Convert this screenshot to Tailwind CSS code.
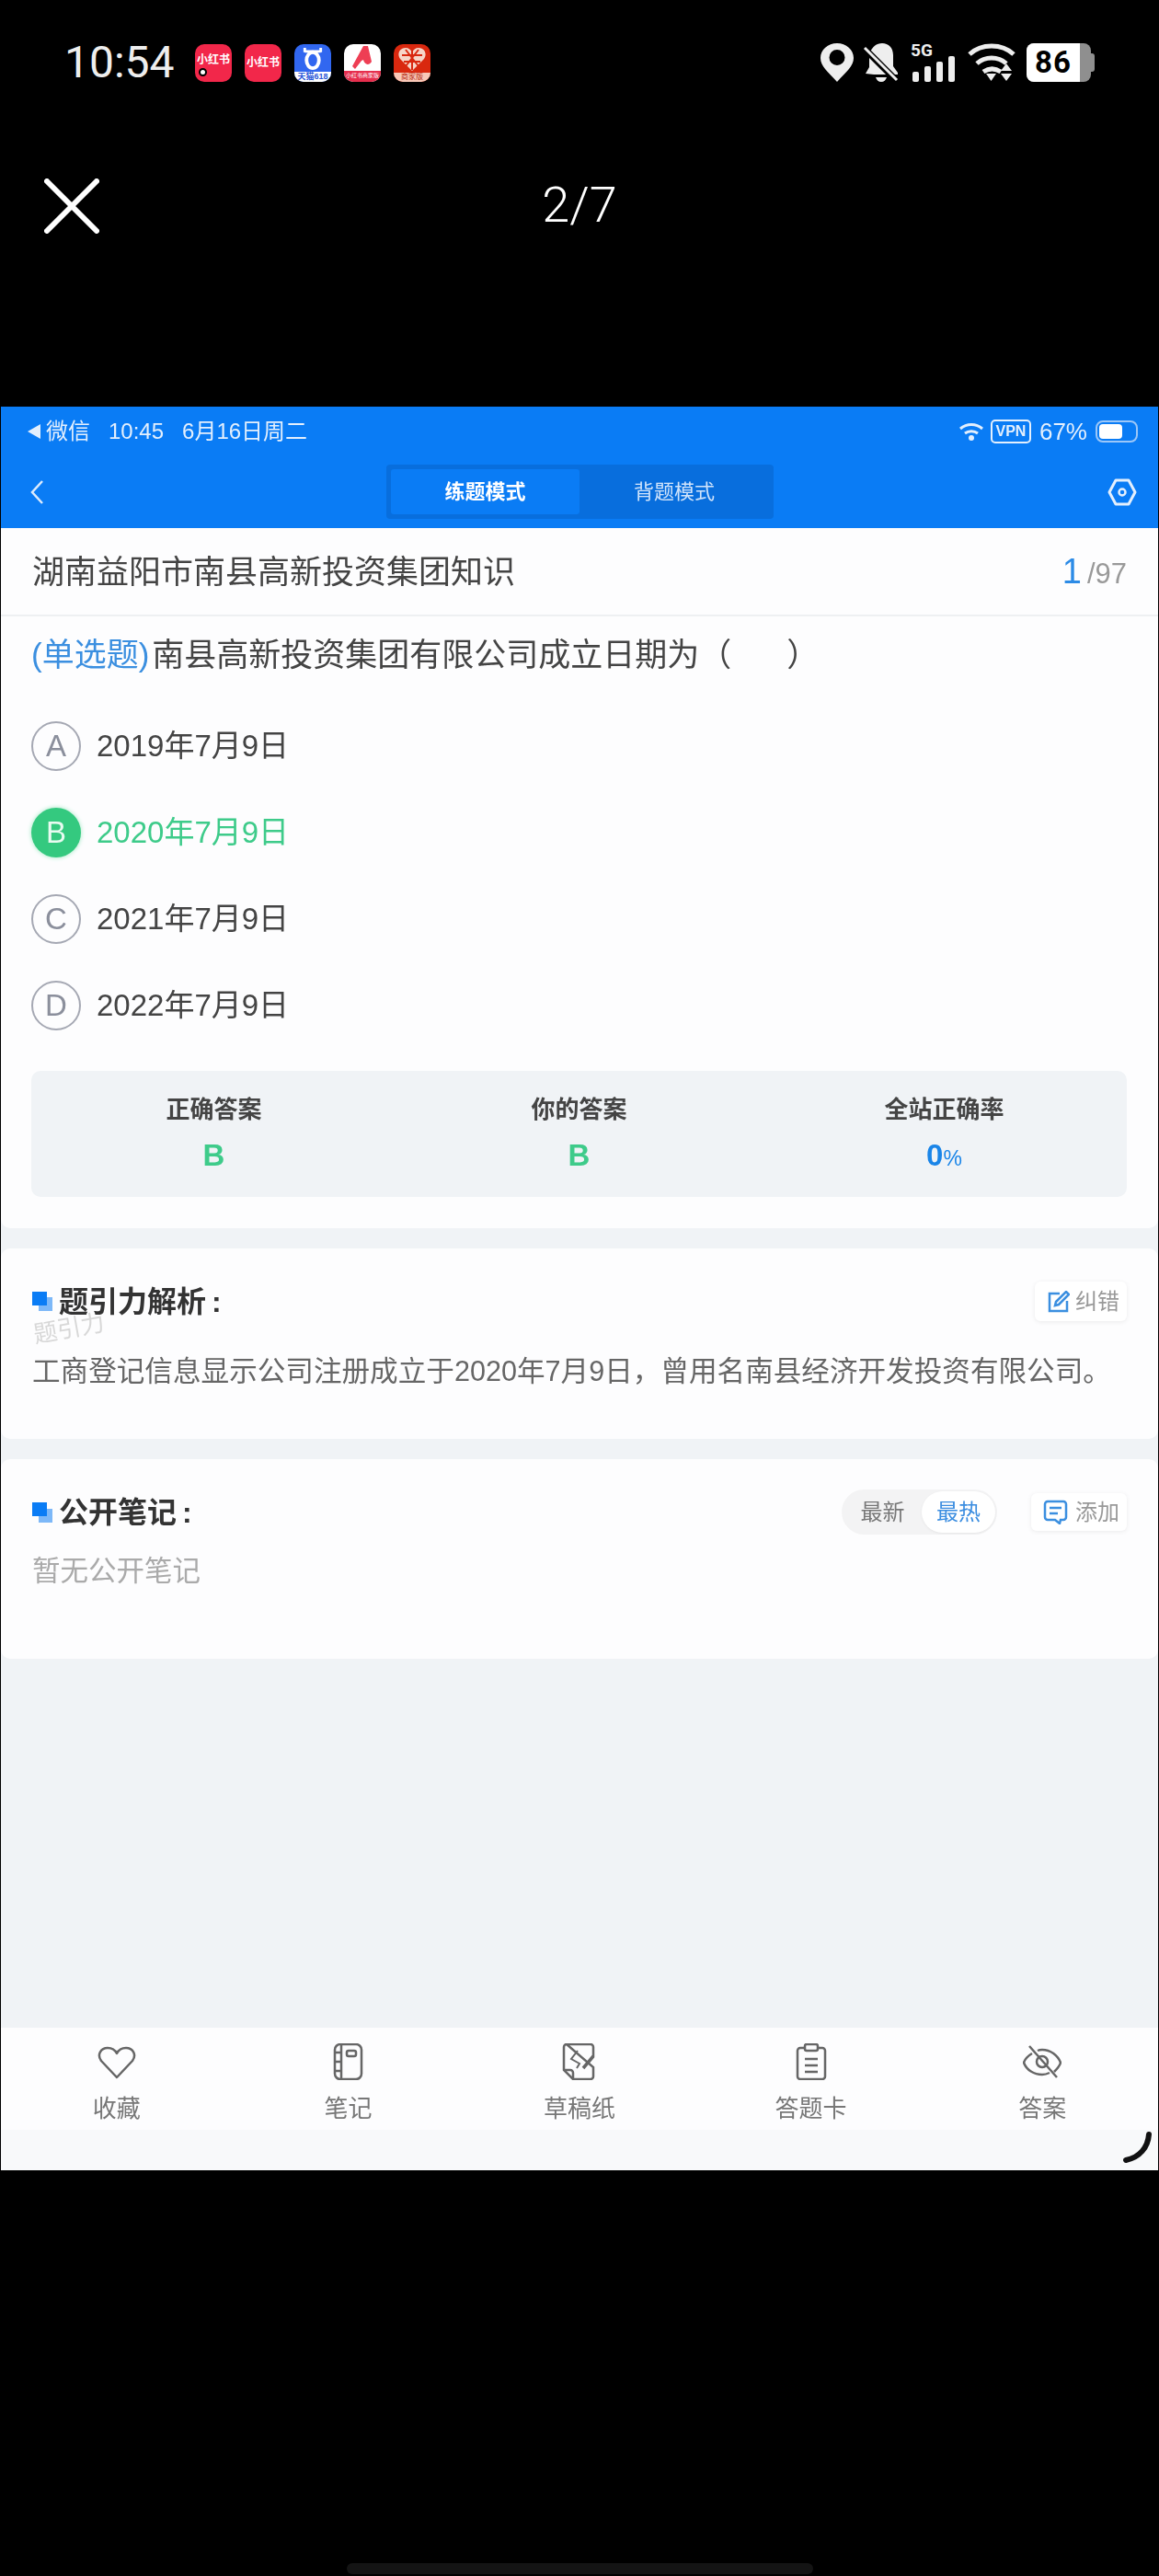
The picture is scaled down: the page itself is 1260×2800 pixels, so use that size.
<!DOCTYPE html>
<html lang="zh-CN">
<head>
  <meta charset="UTF-8">
  <title>题引力 截图预览</title>
  <script src="https://cdn.jsdelivr.net/npm/@tailwindcss/browser@4"></script>
</head>
<body class="bg-black font-['Liberation_Sans','Noto_Sans_CJK_SC',sans-serif]">
<div class="w-[1260px] h-[2800px] bg-black flex flex-col overflow-hidden relative">

  <!-- phone status bar -->
  <div class="h-[42px] mt-[47px] flex items-center text-[#eeeeee]">
    <span class="ml-[70px] w-[142px] font-['Roboto'] text-[48px] leading-none">10:54</span>
    <div class="flex gap-[14px]">
      <div class="w-[40px] h-[41px] rounded-[10px] bg-[#f2274a] relative flex items-center justify-center text-white text-[12px] font-bold leading-none pb-[6px]">小红书<span class="absolute left-[4px] bottom-[6px] w-[9px] h-[9px] rounded-full bg-white border-[2px] border-black"></span></div>
      <div class="w-[40px] h-[41px] rounded-[10px] bg-[#f2274a] flex items-center justify-center text-white text-[12px] font-bold leading-none">小红书</div>
      <div class="w-[40px] h-[41px] rounded-[10px] bg-[#3167f0] overflow-hidden flex flex-col items-center">
        <svg width="30" height="28" viewBox="0 0 30 28" class="mt-[3px]"><path d="M6 1v5M24 1v5M6 5h18" stroke="#fff" stroke-width="3" fill="none"/><ellipse cx="15" cy="15" rx="7" ry="9" fill="none" stroke="#fff" stroke-width="4"/></svg>
        <div class="w-full flex-1 bg-white text-[#2b57d8] text-[9px] font-bold text-center leading-[11px]">天猫618</div>
      </div>
      <div class="w-[40px] h-[41px] rounded-[10px] bg-white overflow-hidden flex flex-col items-center">
        <svg width="30" height="28" viewBox="0 0 30 28" class="mt-[1px]"><path d="M16 1h5l4 17c-3 5-8 3-9-2l-2 1-7 9-3-3z" fill="#ee3e54"/></svg>
        <div class="w-full flex-1 bg-[#e62e4d] text-white text-[6px] text-center leading-[10px] whitespace-nowrap">小红书商家版</div>
      </div>
      <div class="w-[40px] h-[41px] rounded-[10px] bg-[#d9280f] overflow-hidden flex flex-col items-center">
        <svg width="32" height="29" viewBox="0 0 32 29" class="mt-[2px]"><path d="M16 27 3 14C-1 8 3 2 9 2c3 0 6 2 7 5 1-3 4-5 7-5 6 0 10 6 6 12z" fill="#f6d5c8"/><path d="M16 4v22M5 10h22M7 17h18M9 4l14 18M23 4 9 22" stroke="#d9280f" stroke-width="2" fill="none"/></svg>
        <div class="w-full flex-1 bg-[#f9c9b8] text-[#b5280f] text-[8px] text-center leading-[10px]">商家版</div>
      </div>
    </div>
    <div class="ml-auto flex items-center">
      <svg width="36" height="42" viewBox="0 0 36 42"><path fill-rule="evenodd" fill="#eeeeee" d="M18 42C8 31 0 25 0 16 0 7 8 0 18 0s18 7 18 16c0 9-8 15-18 26zm0-18a8.500 8.500 0 1 0 0-17 8.500 8.500 0 0 0 0 17z"/></svg>
      <svg width="40" height="42" viewBox="0 0 40 42" class="ml-[10px]"><path fill="#eeeeee" d="M8 10C10 4 15 0 21 0c7 0 12 5 12 13v12l5 7v2H12L3 33l4-7V14zM14 37h12c-1 3-3 5-6 5s-5-2-6-5z"/><path d="M1 5 37 41" stroke="#000" stroke-width="7"/><path d="M2 5 37 40" stroke="#eeeeee" stroke-width="3"/></svg>
      <div class="relative w-[50px] h-[42px] ml-[12px]">
        <span class="absolute left-0 top-[-2px] font-['Roboto'] font-bold text-[19px] leading-[20px]">5G</span>
        <div class="absolute left-[2px] bottom-0 flex items-end gap-[6px]">
          <div class="w-[7px] h-[11px] rounded-[2px] bg-[#eeeeee]"></div>
          <div class="w-[7px] h-[17px] rounded-[2px] bg-[#eeeeee]"></div>
          <div class="w-[7px] h-[22px] rounded-[2px] bg-[#eeeeee]"></div>
          <div class="w-[7px] h-[28px] rounded-[2px] bg-[#eeeeee]"></div>
        </div>
      </div>
      <svg width="54" height="42" viewBox="0 0 54 42" class="ml-[12px]"><g fill="none" stroke="#eeeeee" stroke-width="5"><path d="M2 12C15 0 37 0 50 12"/><path d="M10 22c9-8 23-8 32 0"/><path d="M17 31c6-4 13-4 19 0"/></g><path d="M20 33h11l-5.500 8zM42 22l6 8H36zM36 33h12l-6 8z" fill="#eeeeee"/></svg>
      <div class="ml-[10px] mr-[70px] flex items-center">
        <div class="w-[70px] h-[42px] rounded-[8px] overflow-hidden bg-[#8f8f8f] flex">
          <div class="w-[58px] bg-white text-black font-['Roboto'] font-bold text-[33px] leading-[42px] text-center tracking-[1px]">86</div>
        </div>
        <div class="w-[4px] h-[20px] rounded-r-[3px] bg-[#8f8f8f]"></div>
      </div>
    </div>
  </div>

  <!-- viewer bar -->
  <div class="h-[60px] mt-[104px] relative flex items-center justify-center">
    <svg width="60" height="60" viewBox="0 0 60 60" class="absolute left-[48px] top-[1px]"><path d="M3 3 57 57M57 3 3 57" stroke="#ffffff" stroke-width="6" stroke-linecap="round"/></svg>
    <span class="font-['Roboto'] font-light text-[54px] leading-none text-white">2/7</span>
  </div>

  <!-- screenshot in viewer -->
  <div class="mx-[1px] mt-[189px] h-[1917px] bg-[#f0f3f6] flex flex-col relative blur-[0.6px]">

    <div class="h-[132px] bg-[#0a7cf5] shrink-0">
      <div class="h-[53px] pl-[29px] pr-[22px] flex items-center justify-between text-[#e3effd] text-[24px] leading-none">
        <div class="flex items-center">
          <span class="w-0 h-0 border-y-[8px] border-y-transparent border-r-[14px] border-r-[#e3effd] mr-[6px]"></span>
          <span>微信</span><span class="ml-[20px]">10:45</span><span class="ml-[20px]">6月16日周二</span>
        </div>
        <div class="flex items-center">
          <svg width="26" height="20" viewBox="0 0 26 20"><g fill="none" stroke="#e3effd" stroke-width="3"><path d="M1 7c7-6 17-6 24 0"/><path d="M6 12c4-3 10-3 14 0"/></g><circle cx="13" cy="17" r="3" fill="#e3effd"/></svg>
          <span class="ml-[8px] border-[2px] border-[#e3effd] rounded-[5px] h-[26px] w-[44px] text-[16px] font-bold leading-[22px] text-center">VPN</span>
          <span class="ml-[9px] text-[26px]">67%</span>
          <div class="ml-[9px] w-[46px] h-[24px] rounded-[8px] border-[2px] border-[#9cc7f8] p-[2px]"><div class="w-[25px] h-full rounded-[4px] bg-white"></div></div>
        </div>
      </div>
      <div class="h-[79px] relative flex items-start justify-center pt-[10px]">
        <svg width="16" height="28" viewBox="0 0 16 28" class="absolute left-[31px] top-[26px]"><path d="M14 2 3 14l11 12" fill="none" stroke="#dcebfd" stroke-width="2.500"/></svg>
        <div class="w-[421px] h-[59px] bg-[#086edd] rounded-[4px] flex p-[5px] ml-[1px]">
          <div class="w-[205px] bg-[#0a7cf5] rounded-[3px] flex items-center justify-center text-white text-[22px] font-bold">练题模式</div>
          <div class="flex-1 flex items-center justify-center text-[#cfe3fb] text-[22px]">背题模式</div>
        </div>
        <svg width="32" height="30" viewBox="0 0 32 30" class="absolute right-[23px] top-[25px]"><path d="M9 2h14l7 13-7 13H9L2 15z" fill="none" stroke="#e3effd" stroke-width="3" stroke-linejoin="round"/><circle cx="16" cy="15" r="3.500" fill="none" stroke="#e3effd" stroke-width="2.500"/></svg>
      </div>
    </div>

    <div class="bg-[#fdfdfe] rounded-b-[10px] h-[761px] shrink-0">
      <div class="h-[96px] border-b-[2px] border-[#eef0f2] pl-[34px] pr-[34px] flex items-center justify-between">
        <span class="text-[35px] leading-none text-[#444444]">湖南益阳市南县高新投资集团知识</span>
        <span class="flex items-baseline"><span class="text-[38px] text-[#2c8be6]">1</span><span class="ml-[6px] text-[31px] text-[#999999]">/97</span></span>
      </div>
      <div class="h-[74px] pl-[33px] flex items-center text-[35px] leading-none text-[#444444] pt-[8px]">
        <span class="text-[#3b8fe0] mr-[3px] whitespace-nowrap">(单选题)</span><span class="whitespace-nowrap">南县高新投资集团有限公司成立日期为（<span class="inline-block w-[60px]"></span>）</span>
      </div>
      <div class="pl-[33px] flex flex-col gap-[40px] mt-[40px]">
        <div class="h-[54px] flex items-center">
          <span class="w-[54px] h-[54px] rounded-full border-[2px] border-[#a5a8b3] flex items-center justify-center text-[33px] text-[#8b8f9c]">A</span>
          <span class="ml-[17px] text-[33px] text-[#444444]">2019年7月9日</span>
        </div>
        <div class="h-[54px] flex items-center">
          <span class="w-[54px] h-[54px] rounded-full bg-[#34c97f] shadow-[0_0_5px_#9ce8c0] flex items-center justify-center text-[33px] text-[#e8fbf1]">B</span>
          <span class="ml-[17px] text-[33px] text-[#3ecb8a]">2020年7月9日</span>
        </div>
        <div class="h-[54px] flex items-center">
          <span class="w-[54px] h-[54px] rounded-full border-[2px] border-[#a5a8b3] flex items-center justify-center text-[33px] text-[#8b8f9c]">C</span>
          <span class="ml-[17px] text-[33px] text-[#444444]">2021年7月9日</span>
        </div>
        <div class="h-[54px] flex items-center">
          <span class="w-[54px] h-[54px] rounded-full border-[2px] border-[#a5a8b3] flex items-center justify-center text-[33px] text-[#8b8f9c]">D</span>
          <span class="ml-[17px] text-[33px] text-[#444444]">2022年7月9日</span>
        </div>
      </div>
      <div class="mt-[44px] ml-[33px] w-[1191px] h-[137px] bg-[#f0f3f6] rounded-[10px] grid grid-cols-3 text-center pt-[25px]">
        <div><div class="text-[26px] leading-[34px] font-bold text-[#444444]">正确答案</div><div class="mt-[16px] text-[33px] leading-[34px] font-bold text-[#3ecb8a]">B</div></div>
        <div><div class="text-[26px] leading-[34px] font-bold text-[#444444]">你的答案</div><div class="mt-[16px] text-[33px] leading-[34px] font-bold text-[#3ecb8a]">B</div></div>
        <div><div class="text-[26px] leading-[34px] font-bold text-[#444444]">全站正确率</div><div class="mt-[16px] text-[33px] leading-[34px] font-bold text-[#1a85e8]">0<span class="text-[23px] font-normal">%</span></div></div>
      </div>
    </div>

    <div class="mt-[22px] bg-[#fdfdfe] rounded-[10px] h-[207px] shrink-0 relative px-[34px] pt-[36px]">
      <div class="flex items-center justify-between">
        <div class="flex items-center h-[43px]">
          <div class="relative w-[22px] h-[21px]">
            <span class="absolute right-0 bottom-0 w-[15px] h-[15px] bg-[#7db8f8]"></span>
            <span class="absolute left-0 top-0 w-[16px] h-[15px] bg-[#0a7cf5]"></span>
          </div>
          <span class="ml-[7px] text-[32px] leading-none font-bold text-[#333333]">题引力解析<span class="ml-[6px]">:</span></span>
        </div>
        <div class="w-[100px] h-[43px] bg-white rounded-[6px] shadow-[0_1px_5px_rgba(0,0,0,0.08)] flex items-center pl-[14px] text-[24px] text-[#999999]">
          <svg width="24" height="24" viewBox="0 0 24 24"><path d="M13 3H2v19h19V11" fill="none" stroke="#3b8fe0" stroke-width="2.500"/><path d="M9 12 20 1l3 3-11 11-4 1z" fill="none" stroke="#3b8fe0" stroke-width="2.500"/></svg>
          <span class="ml-[6px]">纠错</span>
        </div>
      </div>
      <span class="absolute left-[35px] top-[74px] text-[26px] leading-none text-[#d8d8d8] -rotate-[10deg]">题引力</span>
      <div class="mt-[39px] text-[30.600px] leading-none text-[#666666] whitespace-nowrap">工商登记信息显示公司注册成立于2020年7月9日，曾用名南县经济开发投资有限公司。</div>
    </div>

    <div class="mt-[22px] bg-[#fdfdfe] rounded-[10px] h-[217px] shrink-0 px-[34px] pt-[33px]">
      <div class="flex items-center h-[49px]">
        <div class="relative w-[22px] h-[22px]">
          <span class="absolute right-0 bottom-0 w-[15px] h-[15px] bg-[#7db8f8]"></span>
          <span class="absolute left-0 top-0 w-[16px] h-[15px] bg-[#0a7cf5]"></span>
        </div>
        <span class="ml-[7px] text-[32px] leading-none font-bold text-[#333333]">公开笔记<span class="ml-[6px]">:</span></span>
        <div class="ml-auto w-[169px] h-[49px] rounded-full bg-[#f3f3f4] flex items-center text-[24px] p-[2px]">
          <span class="w-[85px] text-center text-[#777777]">最新</span>
          <span class="w-[80px] h-[45px] rounded-full bg-white shadow-[0_1px_3px_rgba(0,0,0,0.05)] flex items-center justify-center text-[#3b8de0]">最热</span>
        </div>
        <div class="ml-[37px] w-[104px] h-[41px] bg-white rounded-[6px] shadow-[0_1px_5px_rgba(0,0,0,0.08)] flex items-center pl-[13px] text-[24px] text-[#999999]">
          <svg width="27" height="27" viewBox="0 0 27 27"><path d="M5 2h17a3 3 0 0 1 3 3v14a3 3 0 0 1-3 3h-3l-1 4-5-4H5a3 3 0 0 1-3-3V5a3 3 0 0 1 3-3z" fill="none" stroke="#3b8fe0" stroke-width="2.500"/><path d="M7 9h13M7 15h9" stroke="#3b8fe0" stroke-width="2.500"/></svg>
          <span class="ml-[8px]">添加</span>
        </div>
      </div>
      <div class="mt-[24px] text-[30.500px] leading-none text-[#aaaaaa]">暂无公开笔记</div>
    </div>

    <div class="flex-1"></div>

    <!-- bottom tabs -->
    <div class="h-[111px] bg-[#fdfdfe] grid grid-cols-5 shrink-0 pt-[17px] text-[26px] leading-none text-[#777777] text-center">
      <div class="flex flex-col items-center">
        <svg width="42" height="40" viewBox="0 0 42 40"><path d="M21 37 4 19C-1 12 4 5 11 5c4 0 8 2 10 6 2-4 6-6 10-6 7 0 12 7 7 14z" fill="none" stroke="#666666" stroke-width="2.500" stroke-linejoin="round"/></svg>
        <span class="mt-[18px]">收藏</span>
      </div>
      <div class="flex flex-col items-center">
        <svg width="42" height="40" viewBox="0 0 42 40"><rect x="7" y="1" width="29" height="38" rx="6" fill="none" stroke="#666666" stroke-width="2.500"/><path d="M14 1v38M7 10h7M7 20h7M7 30h7" stroke="#666666" stroke-width="2.500"/><rect x="20" y="8" width="10" height="6" rx="2" fill="none" stroke="#666666" stroke-width="2.500"/></svg>
        <span class="mt-[18px]">笔记</span>
      </div>
      <div class="flex flex-col items-center">
        <svg width="42" height="40" viewBox="0 0 42 40"><path d="M7 1h26a3 3 0 0 1 3 3v11M36 26v10a3 3 0 0 1-3 3H14l-10-10V4a3 3 0 0 1 3-3z" fill="none" stroke="#666666" stroke-width="2.500"/><path d="M4 29h7a3 3 0 0 1 3 3v7" fill="none" stroke="#666666" stroke-width="2.500"/><path d="M19 8l-7 9 9 5-3 5" fill="none" stroke="#666666" stroke-width="2"/><path d="M25 27 36 14" stroke="#666666" stroke-width="3.500"/></svg>
        <span class="mt-[18px]">草稿纸</span>
      </div>
      <div class="flex flex-col items-center">
        <svg width="42" height="40" viewBox="0 0 42 40"><path d="M13 5H9a3 3 0 0 0-3 3v28a3 3 0 0 0 3 3h24a3 3 0 0 0 3-3V8a3 3 0 0 0-3-3h-4" fill="none" stroke="#666666" stroke-width="2.500"/><rect x="14" y="1" width="14" height="7" rx="2" fill="none" stroke="#666666" stroke-width="2.500"/><path d="M14 17h14M14 24h14M14 31h14" stroke="#666666" stroke-width="2.500"/></svg>
        <span class="mt-[18px]">答题卡</span>
      </div>
      <div class="flex flex-col items-center">
        <svg width="42" height="40" viewBox="0 0 42 40"><path d="M10 11C5 14 2 18 1 21c3 8 11 13 20 13 3 0 6-1 8-2M16 8c2-1 3-1 5-1 9 0 17 6 20 14-1 4-4 7-7 10" fill="none" stroke="#666666" stroke-width="2.500"/><path d="M7 3l30 34" stroke="#666666" stroke-width="2.500"/><circle cx="21" cy="20" r="6" fill="none" stroke="#666666" stroke-width="2.500"/></svg>
        <span class="mt-[18px]">答案</span>
      </div>
    </div>
    <div class="h-[44px] bg-[#f8f9fa] shrink-0"></div>
    <svg width="36" height="36" viewBox="0 0 36 36" class="absolute right-[5px] bottom-[6px]"><path d="M31 3c-1 14-10 25-25 28" fill="none" stroke="#111111" stroke-width="6" stroke-linecap="round"/></svg>
  </div>

  <!-- gesture bar -->
  <div class="mt-[427px] ml-[377px] w-[507px] h-[12px] rounded-full bg-[#141414]"></div>
</div>
</body>
</html>
